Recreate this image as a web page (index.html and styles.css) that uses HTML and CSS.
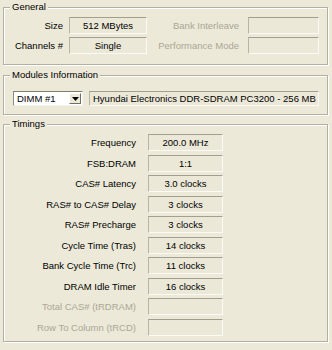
FILE: index.html
```html
<!DOCTYPE html>
<html>
<head>
<meta charset="utf-8">
<link rel="stylesheet" href="styles.css">
</head>
<body>
<div class="page">
  <section class="group general">
    <span class="legend">General</span>
    <div class="gen-grid">
      <span class="lbl">Size</span>
      <span class="field">512 MBytes</span>
      <span class="lbl lbl-wide dis">Bank Interleave</span>
      <span class="field"></span>
      <span class="lbl">Channels #</span>
      <span class="field">Single</span>
      <span class="lbl lbl-wide dis">Performance Mode</span>
      <span class="field"></span>
    </div>
  </section>

  <section class="group modules">
    <span class="legend">Modules Information</span>
    <div class="mod-row">
      <div class="combo">
        <span class="combo-text">DIMM #1</span>
        <span class="combo-btn"><svg width="7" height="4" viewBox="0 0 7 4"><path d="M0 0H7L3.5 4Z" fill="#000"/></svg></span>
      </div>
      <span class="field field-left mod-field">Hyundai Electronics DDR-SDRAM PC3200 - 256 MB</span>
    </div>
  </section>

  <section class="group timings">
    <span class="legend">Timings</span>
    <div class="tim-grid">
      <span class="lbl">Frequency</span><span class="field">200.0 MHz</span>
      <span class="lbl">FSB:DRAM</span><span class="field">1:1</span>
      <span class="lbl">CAS# Latency</span><span class="field">3.0 clocks</span>
      <span class="lbl">RAS# to CAS# Delay</span><span class="field">3 clocks</span>
      <span class="lbl">RAS# Precharge</span><span class="field">3 clocks</span>
      <span class="lbl">Cycle Time (Tras)</span><span class="field">14 clocks</span>
      <span class="lbl">Bank Cycle Time (Trc)</span><span class="field">11 clocks</span>
      <span class="lbl">DRAM Idle Timer</span><span class="field">16 clocks</span>
      <span class="lbl dis">Total CAS# (tRDRAM)</span><span class="field"></span>
      <span class="lbl dis">Row To Column (tRCD)</span><span class="field"></span>
    </div>
  </section>
</div>
</body>
</html>
```
FILE: styles.css
```css
* { box-sizing: border-box; }
html, body {
  margin: 0;
  padding: 0;
  background: #ece9d8;
}
body {
  width: 332px;
  height: 350px;
  overflow: hidden;
  font-family: "Liberation Sans", Arial, sans-serif;
  font-size: 9.5px;
  color: #000;
}
.page {
  padding-top: 7px;
  display: flex;
  flex-direction: column;
}
.group {
  position: relative;
  margin: 0 4px 0 3px;
  border: 1px solid #b3b0a1;
  box-shadow: inset 1px 1px 0 #fff, 1px 1px 0 #fff;
}
.legend {
  position: absolute;
  left: 6px;
  top: -7px;
  padding: 0 2px;
  line-height: 12px;
  background: #ece9d8;
}
.lbl {
  text-align: right;
  white-space: nowrap;
  line-height: 17px;
  padding-right: 6px;
}
.lbl.dis { color: #aaa797; }
.field {
  display: block;
  height: 17px;
  line-height: 15px;
  text-align: center;
  white-space: nowrap;
  overflow: hidden;
  border-top: 1px solid #a29f90;
  border-left: 1px solid #b8b5a6;
  border-right: 1px solid #fbfaf6;
  border-bottom: 1px solid #fbfaf6;
  background: #ebe8d8;
}
.field-left { text-align: left; padding-left: 4px; }

.general { padding: 9px 0 10px 0; }
.gen-grid {
  display: grid;
  grid-template-columns: 65px 78px 101px 71px;
  row-gap: 3px;
}
.lbl-wide { padding-right: 9px; }

.modules { margin-top: 10px; padding: 15px 0 8px 9px; }
.mod-row {
  display: flex;
  align-items: center;
  gap: 6px;
}
.combo {
  width: 70px;
  height: 15px;
  display: flex;
  align-items: center;
  background: #fff;
  border-top: 1px solid #7f7d72;
  border-left: 1px solid #8d8b80;
  border-right: 1px solid #f4f3ee;
  border-bottom: 1px solid #f4f3ee;
  padding: 1px;
}
.combo-text {
  flex: 1;
  padding-left: 2px;
  line-height: 12px;
}
.combo-btn {
  width: 12px;
  height: 11px;
  display: flex;
  align-items: center;
  justify-content: center;
  background: #ece9d8;
  border-top: 1px solid #fff;
  border-left: 1px solid #fff;
  border-right: 1px solid #716f64;
  border-bottom: 1px solid #716f64;
}
.mod-field { width: 230px; height: 15px; line-height: 13px; padding-left: 3px; }

.timings { margin-top: 9px; padding: 9px 0 5px 0; }
.tim-grid {
  display: grid;
  grid-template-columns: 144px 75px;
  row-gap: 3.5px;
}
.tim-grid .lbl { padding-right: 12px; }
```
